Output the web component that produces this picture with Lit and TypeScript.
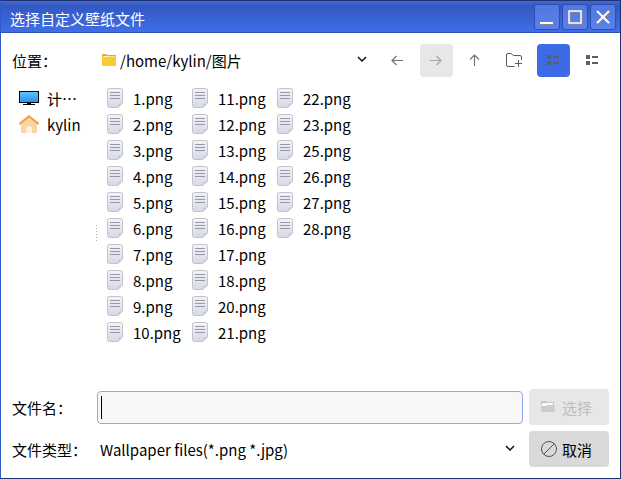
import { LitElement, html, svg, css } from "lit";
import { customElement, state } from "lit/decorators.js";

const FILES = [
  1, 2, 3, 4, 5, 6, 7, 8, 9, 10, 11, 12, 13, 14, 15, 16, 17, 18, 20, 21, 22, 23, 25, 26, 27, 28,
].map((n) => `${n}.png`);

const icon = (w: number, h: number, body: unknown) =>
  html`<svg width=${w} height=${h} viewBox="0 0 ${w} ${h}" fill="none" aria-hidden="true">${body}</svg>`;

const folderIcon = icon(14, 12, svg`
  <path d="M0 1Q0 0 1 0H4L5 1H13Q14 1 14 2V8H0Z" fill="#f0a030"/>
  <path d="M1 2H13V5H1Z" fill="#fff8e0"/>
  <path d="M0 3H5L6 2.500H14V11Q14 12 13 12H1Q0 12 0 11Z" fill="#f5cc35"/>`);

const monitorIcon = icon(20, 14, svg`
  <defs><linearGradient id="screen" x1="0" y1="0" x2="0" y2="1">
    <stop stop-color="#5cc4f8"/><stop offset="1" stop-color="#2795f0"/></linearGradient></defs>
  <rect width="20" height="12" fill="#000"/>
  <rect x="1" y="1" width="18" height="10" fill="url(#screen)"/>
  <path d="M8 12H12V13H16V14H4V13H8Z" fill="#000"/>`);

const homeIcon = icon(20, 18, svg`
  <path d="M2 8L10 2L18 8V17Q18 18 17 18H3Q2 18 2 17Z" fill="#f9d5a2"/>
  <path d="M7 18V13Q7 11 10 11Q13 11 13 13V18Z" fill="#fff0e0"/>
  <path d="M1 8.500L10 1.200L19 8.500" stroke="#f79a3c" stroke-width="2" stroke-linecap="round" stroke-linejoin="round"/>`);

const pageIcon = icon(16, 20, svg`
  <defs><linearGradient id="paper" x1="0" y1="0" x2="0" y2="1">
    <stop stop-color="#f3f3f6"/><stop offset="1" stop-color="#d6d8e6"/></linearGradient></defs>
  <path d="M2.500 .5H13.500Q15.500 .5 15.500 2.500V15L11 19.500H2.500Q.5 19.500 .5 17.500V2.500Q.5 .5 2.500 .5Z" fill="url(#paper)" stroke="#c3c3c9"/>
  <path d="M11.500 19V16.500Q11.500 15.500 12.500 15.500H15Z" fill="#c6c7d0"/>
  <path d="M3 4.500H13M3 7.500H13M3 10.500H13" stroke="#9597ab"/>`);

const newFolderIcon = icon(16, 14, svg`
  <path d="M8.500 13.500H2Q.5 13.500 .5 12V2Q.5 .5 2 .5H5L7.500 2.500H14Q15.500 2.500 15.500 4V7M12.500 7V14M9 10.500H16" stroke="#5c5c5c"/>`);

const listIcon = icon(12, 10, svg`
  <path d="M0 0H4V4H0ZM6 1H12V3H6ZM0 6H4V10H0ZM6 7H12V9H6Z" fill="#5c5f6b"/>`);

const arrow = (d: string, color: string) => icon(12, 12, svg`<path d=${d} stroke=${color} stroke-width="1.200"/>`);
const backIcon = arrow("M12 6.500H1M5.500 2L1 6.500L5.500 11", "#747474");
const forwardIcon = arrow("M0 6.500H11M6.500 2L11 6.500L6.500 11", "#a4a4a4");
const upIcon = arrow("M5.500 12V1M1 5.500L5.500 1L10 5.500", "#747474");

const chevron = icon(10, 6, svg`<path d="M1 1L5 5L9 1" stroke="#111" stroke-width="1.500"/>`);

const openIcon = icon(14, 12, svg`
  <path d="M0 0H5L6 1H13V4H0Z" fill="#c4c4c4"/><path d="M1 2H12V5H1Z" fill="#fafafa"/>
  <path d="M0 5H5L6 4H14L13 11H1Z" fill="#cbcbcb"/>`);

const cancelIcon = icon(16, 16, svg`
  <circle cx="8" cy="8" r="7.500" stroke="#555"/><path d="M2.700 13.300L13.300 2.700" stroke="#555"/>`);

const captionIcon = (shape: (c: string, o: number) => unknown) =>
  icon(16, 16, svg`${shape("#8a8a8a", 1)}${shape("#fff", 0)}`);
const minimizeIcon = captionIcon((c, o) => svg`<path d="M${1 + o} ${13 + o}H${14 + o}" stroke=${c} stroke-width="2"/>`);
const maximizeIcon = captionIcon((c, o) => svg`<path d="M${2 + o} ${1 + o}H${14 + o}V${13 + o}H${2 + o}Z" stroke=${c} stroke-width="1.500"/>`);
const closeIcon = captionIcon((c, o) => svg`<path d="M${2 + o} ${1 + o}L${14 + o} ${13 + o}M${14 + o} ${1 + o}L${2 + o} ${13 + o}" stroke=${c} stroke-width="2"/>`);

@customElement("app-root")
export class AppRoot extends LitElement {
  @state() private fileName = "";

  static styles = css`
    :host {
      display: block;
      font: 15px/24px "Noto Sans CJK SC", sans-serif;
      color: #000;
    }
    * { box-sizing: border-box; }
    svg { display: block; flex: none; }
    button, select, input { font: inherit; color: inherit; margin: 0; padding: 0; border: 0; background: none; }
    .window {
      display: flex;
      flex-direction: column;
      min-height: 100vh;
      background: #fff;
      border: 1px solid #1c3272;
      border-left-color: #2f58c8;
    }
    .titlebar {
      display: flex;
      align-items: center;
      height: 32px;
      padding: 0 4px 0 9px;
      color: #fff;
      background: linear-gradient(#4668d0, #3358c2 5px, #3f6ee8);
      border-bottom: 1px solid #2f54b8;
    }
    .title { flex: 1; margin: 0; padding-top: 4px; font-size: 15px; font-weight: 400; }
    .caption-buttons { display: flex; gap: 2px; }
    .caption {
      display: grid;
      place-items: center;
      width: 26px;
      height: 26px;
      padding-top: 2px;
      border: 1px solid #2c4eae;
      border-radius: 3px;
      background: linear-gradient(#5277de, #5a80ee);
    }
    .body { flex: 1; display: flex; flex-direction: column; gap: 6px; padding: 11px; }
    .toolbar { display: flex; align-items: center; gap: 6px; }
    .label { width: 79px; flex: none; }
    .combo { position: relative; flex: 1; display: flex; align-items: center; height: 33px; min-width: 0; }
    .path { padding-left: 5px; gap: 4px; }
    .path svg { margin-bottom: 2px; }
    .combo select { flex: 1; min-width: 0; height: 28px; appearance: none; outline: none; }
    .combo .arrow { position: absolute; right: 8px; padding-bottom: 2px; pointer-events: none; }
    .tool { display: grid; place-items: center; width: 33px; height: 33px; padding: 0 2px 2px 0; border-radius: 4px; }
    .tool:disabled { background: #e7e7e7; }
    .tool.active { background: #3d6be5; }
    .panes { flex: 1; display: flex; }
    .places { width: 93px; flex: none; padding: 3px 0 0 7px; }
    .list { list-style: none; margin: 0; }
    .entry { display: flex; align-items: center; width: 100%; height: 26px; white-space: nowrap; }
    .entry svg { margin-bottom: 2px; }
    .places .entry { gap: 8px; }
    .splitter {
      align-self: center;
      width: 1px;
      height: 16px;
      margin: 0 2px 0 -9px;
      background: repeating-linear-gradient(#aaa 0 1px, #fff 1px 3px);
    }
    .files {
      display: grid;
      grid-auto-flow: column;
      grid-template-rows: repeat(10, 26px);
      grid-auto-columns: 85px;
      padding: 3px 0 0 8px;
    }
    .files .entry { gap: 10px; }
    .footer { display: grid; grid-template-columns: 79px 1fr 80px; gap: 6px; align-items: center; }
    .footer label, .footer .combo select { padding-top: 2px; }
    .field { position: relative; display: flex; align-items: center; }
    .field input {
      width: 100%;
      height: 33px;
      padding: 0 5px;
      border: 1px solid #8ea9ee;
      border-radius: 4px;
      background: #f7f7f7;
      outline: none;
      caret-color: transparent;
    }
    .caret { position: absolute; left: 4px; width: 1px; height: 23px; background: #000; }
    .filter select { padding-left: 3px; }
    .action {
      display: flex;
      align-items: center;
      gap: 5px;
      height: 36px;
      padding: 2px 0 0 12px;
      border-radius: 4px;
      background: #d9d9d9;
    }
    .action svg { margin-bottom: 2px; }
    .action:disabled { color: #bebebe; background: #e7e7e7; gap: 7px; }
  `;

  render() {
    return html`
      <div class="window">
        <header class="titlebar">
          <h1 class="title">选择自定义壁纸文件</h1>
          <div class="caption-buttons">
            <button class="caption" aria-label="最小化">${minimizeIcon}</button>
            <button class="caption" aria-label="最大化">${maximizeIcon}</button>
            <button class="caption" aria-label="关闭">${closeIcon}</button>
          </div>
        </header>
        <main class="body">
          <div class="toolbar">
            <label class="label" for="location">位置：</label>
            <div class="combo path">
              ${folderIcon}
              <select id="location"><option>/home/kylin/图片</option></select>
              <span class="arrow">${chevron}</span>
            </div>
            <button class="tool" aria-label="后退">${backIcon}</button>
            <button class="tool" aria-label="前进" disabled>${forwardIcon}</button>
            <button class="tool" aria-label="上一级">${upIcon}</button>
            <button class="tool" aria-label="新建文件夹">${newFolderIcon}</button>
            <button class="tool active" aria-label="列表视图">${listIcon}</button>
            <button class="tool" aria-label="详细视图">${listIcon}</button>
          </div>
          <div class="panes">
            <ul class="list places">
              <li><button class="entry">${monitorIcon}<span>计⋯</span></button></li>
              <li><button class="entry">${homeIcon}<span>kylin</span></button></li>
            </ul>
            <div class="splitter"></div>
            <ul class="list files">
              ${FILES.map(
                (name) => html`<li>
                  <button class="entry" @click=${() => (this.fileName = name)}>${pageIcon}<span>${name}</span></button>
                </li>`
              )}
            </ul>
          </div>
          <div class="footer">
            <label for="name">文件名：</label>
            <div class="field">
              <input id="name" type="text" autocomplete="off" .value=${this.fileName}
                @input=${(e: Event) => (this.fileName = (e.target as HTMLInputElement).value)} />
              ${this.fileName ? "" : html`<span class="caret"></span>`}
            </div>
            <button class="action" ?disabled=${!this.fileName}>${openIcon}选择</button>
            <label for="type">文件类型：</label>
            <div class="combo filter">
              <select id="type"><option>Wallpaper files(*.png *.jpg)</option></select>
              <span class="arrow">${chevron}</span>
            </div>
            <button class="action">${cancelIcon}取消</button>
          </div>
        </main>
      </div>
    `;
  }
}
